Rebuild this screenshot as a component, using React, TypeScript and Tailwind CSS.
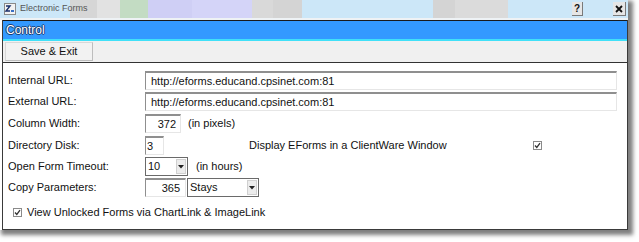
import React from 'react';

const rows = [
  { label: 'Internal URL:', kind: 'url', value: 'http://eforms.educand.cpsinet.com:81' },
  { label: 'External URL:', kind: 'url', value: 'http://eforms.educand.cpsinet.com:81' },
];

function Arrow() {
  return (
    <div className="w-[10px] h-[15px] bg-[#ececec] border border-[#d0d0d0] flex items-center justify-center">
      <svg width="6" height="4" viewBox="0 0 6 4">
        <polygon points="0,0 6,0 3,3.5" fill="#222" />
      </svg>
    </div>
  );
}

function Check() {
  return (
    <div className="w-[9px] h-[9px] border border-[#8a8a8a] bg-white flex items-center justify-center">
      <svg width="7" height="7" viewBox="0 0 7 7">
        <polyline points="1,3.5 2.8,5.5 6,1.2" fill="none" stroke="#333" strokeWidth="1.3" />
      </svg>
    </div>
  );
}

const field = 'h-[19px] bg-white border-t-2 border-l border-[#8f8f8f] border-r border-b border-r-[#e6e6e6] border-b-[#e6e6e6] flex items-center text-[11px] text-[#111]';

export default function App() {
  return (
    <div className="w-[639px] h-[242px] bg-white overflow-hidden font-['Liberation_Sans',Arial,sans-serif]">
      <div className="w-[628px] flex flex-col shadow-[3px_3px_4px_2px_rgba(0,0,0,0.5)]">
        {/* Title bar */}
        <div className="h-[18px] flex items-center bg-[linear-gradient(to_right,#cce7f8_0_70px,#d6d6d6_70px_97px,#e2e2e2_97px_120px,#c3dcc3_120px_148px,#cfcff5_148px_192px,#d4d4f8_192px_252px,#d9d9d9_252px_273px,#d4d4d4_273px_302px,#cce7f8_302px_433px,#d4d4d4_433px_455px,#dbdbdb_455px_508px,#cce7f8_508px)]">
          <svg className="ml-[4px]" width="12" height="12" viewBox="0 0 12 12">
            <rect x="0.5" y="0.5" width="11" height="11" fill="#f2f2f2" stroke="#8a8a8a" />
            <path d="M2 3 H6 L2 8 H6" fill="none" stroke="#1b2f6b" strokeWidth="1.4" />
            <rect x="7" y="7" width="3" height="2" fill="#3a6fc4" />
          </svg>
          <span className="ml-[4px] text-[9px] text-[#555]">Electronic Forms</span>
          <div className="ml-auto mr-[30px] w-[11px] h-[14px] bg-[#e6e6e6] border-r border-b border-[#7a7a7a] flex items-center justify-center text-[10px] font-bold text-[#111]">?</div>
          <div className="mr-[2px] w-[13px] h-[14px] bg-[#e6e6e6] border-r border-b border-[#7a7a7a] flex items-center justify-center">
            <svg width="8" height="8" viewBox="0 0 8 8">
              <path d="M1 1 L7 7 M7 1 L1 7" stroke="#111" strokeWidth="1.8" />
            </svg>
          </div>
        </div>
        <div className="h-[2px] bg-[#eef2f5]" />

        <div className="ml-[2px] border-l border-r border-b border-[#3a3a3a]">
          {/* Blue bar */}
          <div className="h-[21px] border-t border-[#1a1a1a] bg-[#3399ff] border-b-2 border-b-[#40e0f8] flex items-center pl-[3px]">
            <span className="text-[12px] text-white [text-shadow:1px_0_#1c3d70,-1px_0_#1c3d70,0_1px_#1c3d70,0_-1px_#1c3d70]">Control</span>
          </div>

          {/* Toolbar */}
          <div className="h-[22px] bg-[#f0f0f0] border-b border-[#333] flex items-center pl-[2px]">
            <button className="w-[88px] h-[19px] bg-[#f2f2f2] border border-[#d8d8d8] border-r-[#bdbdbd] border-b-[#bdbdbd] text-[11px] text-[#111] flex items-center justify-center">
              Save &amp; Exit
            </button>
          </div>

          {/* Content */}
          <div className="h-[166px] bg-white pl-[5px] pt-[8px] flex flex-col text-[11px] text-[#111]">
            {rows.map((r, i) => (
              <div key={r.label} className={`flex items-center h-[19px] ${i === 1 ? 'mt-[2px]' : ''}`}>
                <span className="w-[137px]">{r.label}</span>
                <div className={`${field} w-[472px] pl-[5px]`}>{r.value}</div>
              </div>
            ))}

            <div className="flex items-center h-[19px] mt-[3px]">
              <span className="w-[137px]">Column Width:</span>
              <div className={`${field} w-[36px] justify-end pr-[4px]`}>372</div>
              <span className="ml-[7px]">(in pixels)</span>
            </div>

            <div className="flex items-center h-[19px] mt-[3px]">
              <span className="w-[137px]">Directory Disk:</span>
              <div className={`${field} w-[19px] pl-[1px]`}>3</div>
              <span className="ml-[85px]">Display EForms in a ClientWare Window</span>
              <div className="ml-[86px]">
                <Check />
              </div>
            </div>

            <div className="flex items-center h-[19px] mt-[2px]">
              <span className="w-[137px]">Open Form Timeout:</span>
              <div className="h-[19px] w-[43px] border border-[#6a6a6a] bg-white flex items-center justify-between pl-[2px] pr-[1px]">
                <span>10</span>
                <Arrow />
              </div>
              <span className="ml-[8px]">(in hours)</span>
            </div>

            <div className="flex items-center h-[19px] mt-[2px]">
              <span className="w-[137px]">Copy Parameters:</span>
              <div className={`${field} w-[41px] justify-end pr-[5px]`}>365</div>
              <div className="ml-[1px] h-[19px] w-[72px] border border-[#6a6a6a] bg-white flex items-center justify-between pl-[2px] pr-[1px]">
                <span>Stays</span>
                <Arrow />
              </div>
            </div>

            <div className="flex items-center h-[14px] mt-[8px] pl-[5px]">
              <Check />
              <span className="ml-[5px]">View Unlocked Forms via ChartLink &amp; ImageLink</span>
            </div>
          </div>
        </div>
      </div>
    </div>
  );
}
